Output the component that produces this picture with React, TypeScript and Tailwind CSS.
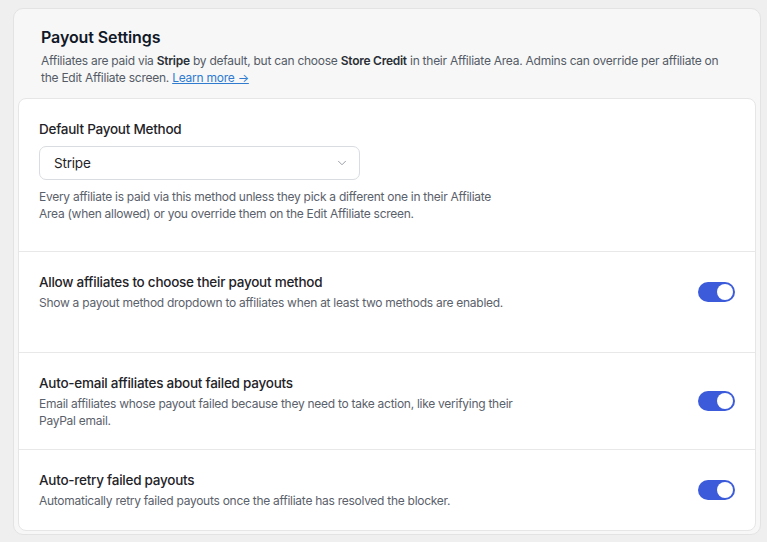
import { ChevronDown } from "lucide-react";

function Toggle() {
  return (
    <div className="flex h-[20px] w-[37px] shrink-0 items-center justify-end rounded-full bg-[#3b5bdb] px-[2px]">
      <div className="h-[16px] w-[16px] rounded-full bg-white" />
    </div>
  );
}

function ToggleRow({
  title,
  desc,
  extra = "",
}: {
  title: string;
  desc: string;
  extra?: string;
}) {
  return (
    <div className={`flex items-start border-t border-[#e8e8e8] px-5 pt-[20px] ${extra}`}>
      <div className="flex flex-1 items-center justify-between">
        <div className="max-w-[480px]">
          <div className="text-[13.5px] leading-5 font-medium tracking-[-0.25px] text-[#1f2328]">{title}</div>
          <p className="mt-[2px] text-[12px] leading-[17px] tracking-[-0.27px] text-[#5b616b]">{desc}</p>
        </div>
        <Toggle />
      </div>
    </div>
  );
}

export default function App() {
  return (
    <div className="min-h-screen bg-[#efefef] pt-2 pl-[13px] pr-[6px] font-['Inter',sans-serif]">
      <div className="rounded-[10px] border border-[#e3e3e3] bg-[#f7f7f7] px-[4px] pb-[3px]">
        {/* header */}
        <div className="px-[23px] pt-[16px] pb-[12px]">
          <h1 className="text-[16px] leading-6 font-semibold tracking-[-0.1px] text-[#111827]">Payout Settings</h1>
          <p className="mt-[3px] text-[12px] leading-[17px] tracking-[-0.25px] text-[#545b66]">
            Affiliates are paid via <b className="font-semibold text-[#2a2f36]">Stripe</b> by default, but can choose{" "}
            <b className="font-semibold text-[#2a2f36]">Store Credit</b> in their Affiliate Area. Admins can override per affiliate on
            the Edit Affiliate screen.{" "}
            <a href="#" className="text-[#2f7bd0] underline">
              Learn more →
            </a>
          </p>
        </div>

        <div className="rounded-[8px] border border-[#e6e6e6] bg-white">
          {/* default method */}
          <div className="px-5 pt-[20px] pb-[29px]">
            <div className="text-[13.5px] leading-5 font-medium tracking-[-0.25px] text-[#1f2328]">Default Payout Method</div>
            <div className="mt-[7px] flex h-[34px] w-[321px] items-center justify-between rounded-[7px] border border-[#d9dce1] pl-[14px] pr-[10px]">
              <span className="text-[13.5px] tracking-[-0.2px] text-[#1f2328]">Stripe</span>
              <ChevronDown size={14} strokeWidth={1.5} className="text-[#8a9099]" />
            </div>
            <p className="mt-[9px] max-w-[480px] text-[12px] leading-[16.5px] tracking-[-0.27px] text-[#5b616b]">
              Every affiliate is paid via this method unless they pick a different one in their Affiliate Area (when allowed) or
              you override them on the Edit Affiliate screen.
            </p>
          </div>

          <ToggleRow
            title="Allow affiliates to choose their payout method"
            desc="Show a payout method dropdown to affiliates when at least two methods are enabled."
            extra="pb-[41px]"
          />
          <ToggleRow
            title="Auto-email affiliates about failed payouts"
            desc="Email affiliates whose payout failed because they need to take action, like verifying their PayPal email."
            extra="pb-[20px]"
          />
          <ToggleRow
            title="Auto-retry failed payouts"
            desc="Automatically retry failed payouts once the affiliate has resolved the blocker."
            extra="pb-[21px]"
          />
        </div>
      </div>
    </div>
  );
}
